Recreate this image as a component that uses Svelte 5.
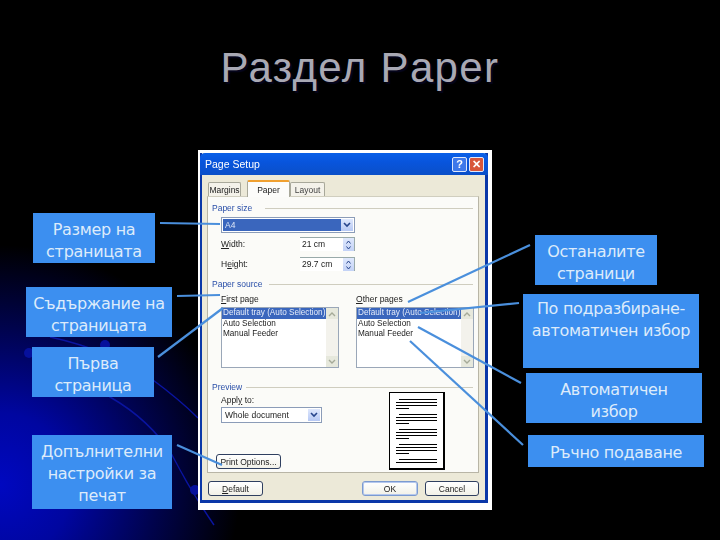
<script>
  const thumbGroups = [
    [[3,38],[0,41],[0,41],[0,13]],
    [[3,38],[0,41],[0,41],[0,13]],
    [[3,38],[0,41],[0,41],[0,13]],
    [[3,38],[0,41],[0,41],[0,13]],
    [[3,38],[0,41]]
  ];
  const callouts = [
    { cls: 'b1', lines: ['Размер на', 'страницата'] },
    { cls: 'b2', lines: ['Съдържание на', 'страницата'] },
    { cls: 'b3', lines: ['Първа', 'страница'] },
    { cls: 'b4', lines: ['Допълнителни', 'настройки за', 'печат'] },
    { cls: 'r1', lines: ['Останалите', 'страници'] },
    { cls: 'r2 top', lines: ['По подразбиране-', 'автоматичен избор'] },
    { cls: 'r3', lines: ['Автоматичен', 'избор'] },
    { cls: 'r4', lines: ['Ръчно подаване'] }
  ];
  const connectors = [
    [160,223,220,224],[177,296,220,295],[158,357,223,308],[177,445,222,465],
    [530,245,408,302],[519,303,420,313],[521,383,418,327],[523,445,410,341]
  ];
  const sources = ['Default tray (Auto Selection)', 'Auto Selection', 'Manual Feeder'];
</script>

<div class="slide">
  <svg class="bg" viewBox="0 0 720 540" width="720" height="540" aria-hidden="true">
    <defs>
      <radialGradient id="glow" cx="0" cy="485" r="240" gradientUnits="userSpaceOnUse">
        <stop offset="0" stop-color="#0008c0"/>
        <stop offset="0.3" stop-color="#0006a0"/>
        <stop offset="0.65" stop-color="#00034e"/>
        <stop offset="1" stop-color="#000"/>
      </radialGradient>
    </defs>
    <rect width="720" height="540" fill="#000"/>
    <rect width="720" height="540" fill="url(#glow)"/>
    <g fill="none" stroke="#0a14a0" stroke-width="1.5">
      <path d="M50 337 Q110 350 153 380 Q180 400 198 418"/>
      <path d="M105 345 Q110 375 110 397 Q150 420 172 455 Q190 490 214 525"/>
      <path d="M28 353 Q70 370 110 397"/>
    </g>
    <g fill="#06109c">
      <circle cx="29" cy="353" r="5"/>
      <circle cx="105" cy="345" r="5"/>
      <circle cx="195" cy="490" r="5"/>
    </g>
  </svg>

  <h1 class="title">Раздел Paper</h1>

  <div class="frame">
    <div class="window">
      <div class="titlebar">
        <span class="ttext">Page Setup</span>
        <span class="cap help">?</span>
        <span class="cap close">✕</span>
      </div>
      <div class="tabs">
        <span class="tab t1">Margins</span>
        <span class="tab active">Paper</span>
        <span class="tab t3">Layout</span>
      </div>
      <div class="panel">
        <div class="legend"><span>Paper size</span><i></i></div>
        <div class="select s1">
          <span class="val sel">A4</span><span class="drop"><svg viewBox="0 0 8 6" width="8" height="6"><path d="M1 1l3 3 3-3" fill="none" stroke="#27458c" stroke-width="1.6"/></svg></span>
        </div>
        <div class="row r-w"><span class="lbl"><u>W</u>idth:</span><span class="spin"><span>21 cm</span><span class="arrows"><svg viewBox="0 0 11 14" width="11" height="14"><path d="M3.5 5.5L5.5 3l2 2.500M3.500 8.500l2 2.500 2-2.500" fill="none" stroke="#27458c"/></svg></span></span></div>
        <div class="row r-h"><span class="lbl">H<u>e</u>ight:</span><span class="spin"><span>29.7 cm</span><span class="arrows"><svg viewBox="0 0 11 14" width="11" height="14"><path d="M3.5 5.5L5.5 3l2 2.500M3.500 8.500l2 2.500 2-2.500" fill="none" stroke="#27458c"/></svg></span></span></div>

        <div class="legend l2"><span>Paper source</span><i></i></div>
        <div class="cols">
          {#each ['First page', 'Other pages'] as head}
            <div class="col">
              <div class="lbl"><u>{head[0]}</u>{head.slice(1)}</div>
              <div class="list">
                <div class="items">
                  {#each sources as s, i}
                    <div class="item" class:hi={i === 0}>{s}</div>
                  {/each}
                </div>
                <div class="sb">
                  <span class="sbb"><svg viewBox="0 0 8 6" width="8" height="6"><path d="M1 5l3-3 3 3" fill="none" stroke="#a5aa98" stroke-width="1.4"/></svg></span>
                  <span class="sbb"><svg viewBox="0 0 8 6" width="8" height="6"><path d="M1 1l3 3 3-3" fill="none" stroke="#a5aa98" stroke-width="1.4"/></svg></span>
                </div>
              </div>
            </div>
          {/each}
        </div>

        <div class="legend l3"><span>Preview</span><i></i></div>
        <div class="preview">
          <div class="pleft">
            <div class="lbl apply">Appl<u>y</u> to:</div>
            <div class="select s2">
              <span class="val">Whole document</span><span class="drop"><svg viewBox="0 0 8 6" width="8" height="6"><path d="M1 1l3 3 3-3" fill="none" stroke="#27458c" stroke-width="1.6"/></svg></span>
            </div>
            <div class="btn print">Print Options...</div>
          </div>
          <div class="page">
            {#each thumbGroups as g}
              <div class="pgroup">
                {#each g as [ml, w]}
                  <div class="pline" style="margin-left:{ml}px;width:{w}px"></div>
                {/each}
              </div>
            {/each}
          </div>
        </div>
      </div>
      <div class="footer">
        <div class="btn def"><u>D</u>efault</div>
        <div class="spacer"></div>
        <div class="btn ok">OK</div>
        <div class="btn cancel">Cancel</div>
      </div>
    </div>
  </div>

  {#each callouts as c}
    <div class="box {c.cls}">
      {#each c.lines as l}<div>{l}</div>{/each}
    </div>
  {/each}

  <svg class="lines" viewBox="0 0 720 540" width="720" height="540" aria-hidden="true">
    {#each connectors as [x1, y1, x2, y2]}
      <line {x1} {y1} {x2} {y2} stroke="#4a8fdc" stroke-width="2.200"/>
    {/each}
  </svg>
</div>

<style>
  :global(body) { margin: 0; background: #000; }
  .slide { position: relative; width: 720px; height: 540px; overflow: hidden; background: #000; }
  .bg, .lines { position: absolute; left: 0; top: 0; }
  .lines { pointer-events: none; }
  .title {
    position: absolute; left: 0; top: 44px; width: 720px; margin: 0;
    text-align: center; font: 400 42px/48px "Liberation Sans", Arial, sans-serif;
    color: #a9a9b4; letter-spacing: 1.35px; text-shadow: 2px 2px 1px #05051c;
  }
  .box {
    position: absolute; box-sizing: border-box; background: #3c8ff0; color: #dcebfb;
    display: flex; flex-direction: column; align-items: center; justify-content: center;
    padding-top: 5px;
    font: 400 16px/22px "DejaVu Sans", Verdana, sans-serif; text-align: center;
    letter-spacing: -0.3px; white-space: nowrap;
  }
  .box.top { justify-content: flex-start; padding-top: 4px; }
  .b1 { left: 33px; top: 213px; width: 122px; height: 50px; }
  .b2 { left: 26px; top: 287px; width: 146px; height: 50px; }
  .b3 { left: 32px; top: 347px; width: 122px; height: 50px; }
  .b4 { left: 32px; top: 435px; width: 140px; height: 74px; padding-top: 3px; }
  .r1 { left: 535px; top: 235px; width: 122px; height: 50px; }
  .r2 { left: 523px; top: 294px; width: 176px; height: 74px; }
  .r3 { left: 526px; top: 373px; width: 176px; height: 50px; }
  .r4 { left: 528px; top: 435px; width: 176px; height: 32px; padding-top: 3px; }

  .frame {
    position: absolute; left: 198px; top: 150px; width: 294px; height: 360px;
    box-sizing: border-box; background: #fff; padding: 3px 4px 7px 2px;
  }
  .window {
    height: 100%; box-sizing: border-box; background: #ece9d8;
    border: solid #0a37a8; border-width: 0 3px 3px 2px;
    display: flex; flex-direction: column;
    font: 8.5px/12px "Liberation Sans", Tahoma, sans-serif; color: #222;
    filter: blur(0.35px);
  }
  .titlebar {
    height: 22px; margin: 0 -3px 0 -2px; display: flex; align-items: center; padding: 0 4px 0 5px;
    background: linear-gradient(#0a60e8, #0855dd 40%, #0a4fc8);
    border-radius: 5px 5px 0 0; color: #fff;
  }
  .ttext { font-size: 10.5px; flex: 1; }
  .cap {
    width: 15px; height: 15px; margin-left: 2px; border: 1px solid #dfe8fb; border-radius: 2px;
    box-sizing: border-box; display: flex; align-items: center; justify-content: center;
    font: 700 11px/1 "Liberation Sans", sans-serif; color: #fff;
  }
  .help { background: #3e78ea; }
  .close { background: #d8563a; }
  .tabs { display: flex; align-items: flex-end; height: 21px; margin-left: 6px; flex: none; }
  .tab {
    box-sizing: border-box; height: 14px; background: #f4f2ea; border: 1px solid #a8a89a; border-bottom: 0;
    border-radius: 2px 2px 0 0; display: flex; align-items: center; justify-content: center;
  }
  .t1 { width: 33px; }
  .active {
    width: 43px; height: 17px; margin-left: 6px; background: #fcfcfa;
    border-top: 2px solid #f0a030; position: relative; top: 1px; z-index: 1;
  }
  .t3 { width: 35px; color: #444; }
  .panel {
    margin-left: 5px; width: 272px; height: 277px; box-sizing: border-box; flex: none;
    background: #fbfbf8; border: 1px solid #b8b5a6; border-top-color: #d0cebf; padding: 5px 0 0 4px;
  }
  .legend { display: flex; align-items: center; height: 12px; gap: 13px; color: #2a4fa8; padding-right: 5px; }
  .legend span { white-space: nowrap; }
  .legend i { flex: 1; height: 1px; background: #cfcdbf; }
  .l2 { margin-top: 7px; gap: 6px; }
  .l3 { margin-top: 13px; gap: 4px; }
  .select, .row, .cols, .preview { margin-left: 9px; }
  .select {
    display: flex; box-sizing: border-box; padding: 1px; background: #fff;
    border: 1px solid #8b9cb8; height: 16px; align-items: stretch;
  }
  .s1 { width: 134px; margin-top: 3px; }
  .s2 { width: 101px; margin: 1px 0 0; }
  .val { flex: 1; padding-left: 2px; line-height: 12px; white-space: nowrap; overflow: hidden; }
  .val.sel { background: #3a66bd; color: #dde6f7; }
  .drop {
    width: 12px; display: flex; align-items: center; justify-content: center;
    background: linear-gradient(#dfe8fd, #b6c8f4); flex: none;
  }
  .row { display: flex; align-items: center; width: 134px; height: 14px; }
  .r-w { margin-top: 4px; }
  .r-h { margin-top: 6px; }
  .lbl { white-space: nowrap; }
  .row .lbl { width: 79px; }
  .spin { flex: 1; display: flex; justify-content: space-between; padding-left: 2px; background: #fff; border-top: 1px solid #9aa; border-right: 1px solid #9aa; height: 14px; box-sizing: border-box; line-height: 12px; }
  .arrows { width: 11px; height: 13px; display: block; background: linear-gradient(#dfe8fd, #c3d2f6); overflow: hidden; }
  .arrows svg { display: block; }
  .cols { display: flex; gap: 17px; margin-top: 3px; }
  .col { width: 118px; }
  .col .lbl { height: 12px; }
  .list {
    margin-top: 2px; height: 61px; box-sizing: border-box; display: flex;
    background: #fff; border: 1px solid #9aa7b8;
  }
  .items { flex: 1; min-width: 0; font-size: 8.2px; }
  .item { height: 10px; line-height: 10px; white-space: nowrap; overflow: hidden; padding-left: 1px; }
  .item.hi { height: 11px; background: #3a66bd; color: #e5ecfa; }
  .sb {
    width: 12px; display: flex; flex-direction: column; justify-content: space-between;
    background: #f3f2ec; flex: none;
  }
  .sbb { height: 11px; display: flex; align-items: center; justify-content: center; background: #e6e8dc; }
  .preview { display: flex; }
  .pleft { width: 168px; }
  .apply { margin-top: 1px; }
  .btn {
    box-sizing: border-box; height: 15px; display: flex; align-items: center; justify-content: center;
    background: linear-gradient(#fff, #f2f1e8); border: 1px solid #2f3f60; border-radius: 3px;
    white-space: nowrap;
  }
  .print { width: 65px; margin: 31px 0 0 -5px; }
  .page {
    width: 56px; height: 78px; margin-top: -1px; box-sizing: border-box; background: #fff;
    border: 1px solid #000; border-right-width: 2px; border-bottom-width: 2px;
    padding: 6px 0 0 6px; display: flex; flex-direction: column; gap: 5px;
  }
  .pgroup { display: flex; flex-direction: column; gap: 2px; }
  .pline { height: 1px; background: #000; }
  .footer { display: flex; padding: 8px 6px 0 6px; }
  .spacer { flex: 1; }
  .def { width: 55px; }
  .ok { width: 56px; border-color: #7b9ad0; box-shadow: inset 0 0 0 1px #b5c8ee; }
  .cancel { width: 54px; margin-left: 7px; }
</style>
